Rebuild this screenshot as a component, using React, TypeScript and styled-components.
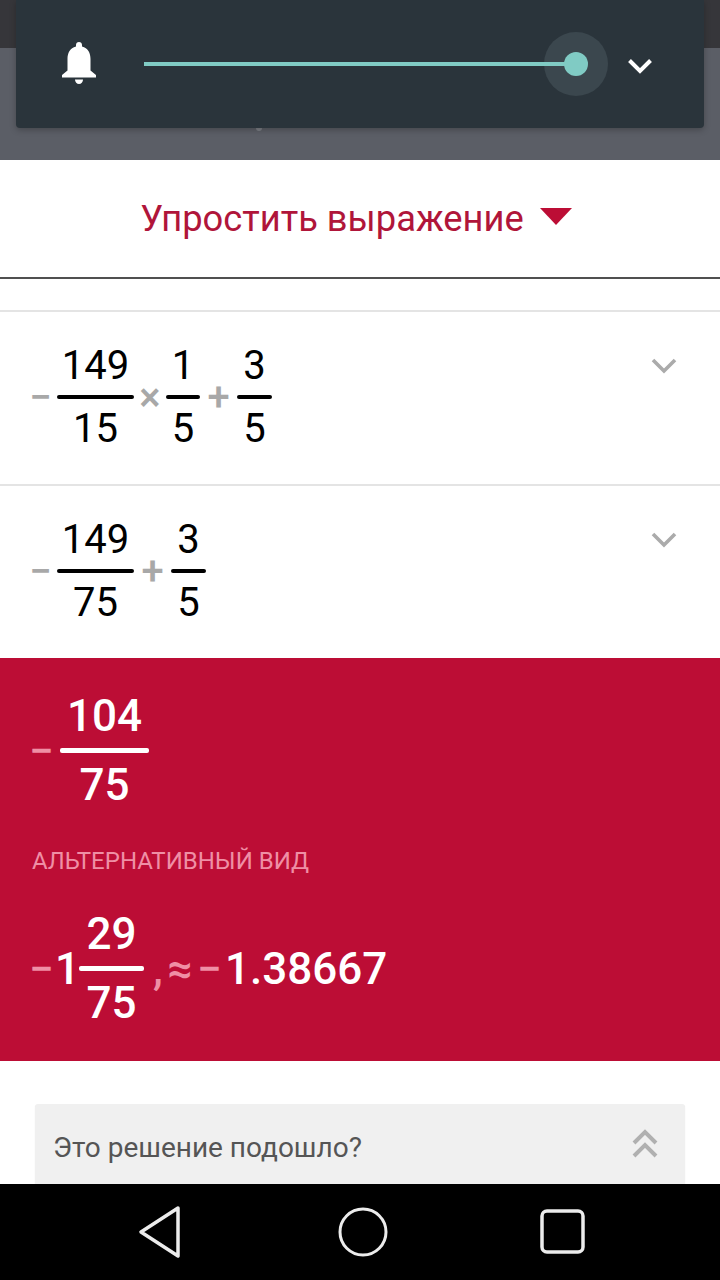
import React from "react";
import styled, { createGlobalStyle } from "styled-components";

const Global = createGlobalStyle`
  html, body { margin: 0; padding: 0; background: #fff; }
  #root { width: 720px; height: 1280px; overflow: hidden; }
  * { box-sizing: border-box; }
`;

const Page = styled.div`
  position: relative;
  width: 720px;
  height: 1280px;
  display: flex;
  flex-direction: column;
  font-family: Roboto, "Liberation Sans", sans-serif;
  overflow: hidden;
`;

const TopDark = styled.div`
  height: 48px;
  background: #36363a;
  flex: none;
`;

const Scrim = styled.div`
  position: relative;
  height: 112px;
  background: #5b5e66;
  flex: none;
`;

const Speck = styled.div`
  position: absolute;
  left: 256px;
  top: 80px;
  width: 6px;
  height: 3px;
  border-radius: 0 0 3px 3px;
  background: #7c7f85;
`;

const VolumePanel = styled.div`
  position: absolute;
  left: 16px;
  top: 0;
  width: 688px;
  height: 128px;
  background: #2a343b;
  border-radius: 0 0 4px 4px;
  box-shadow: 0 2px 6px rgba(0, 0, 0, 0.25);
  display: flex;
  align-items: center;
  padding: 0 0 0 44px;
`;

const BellIcon = styled.svg`
  flex: none;
`;

const Track = styled.div`
  position: relative;
  margin-left: 46px;
  width: 432px;
  height: 4px;
  flex: none;
`;

const ThumbHalo = styled.div`
  position: absolute;
  right: -32px;
  top: -30px;
  width: 64px;
  height: 64px;
  border-radius: 50%;
  background: #3b474e;
`;

const TrackFill = styled.div`
  position: absolute;
  inset: 0;
  background: #80cbc4;
`;

const Thumb = styled.div`
  position: absolute;
  right: -12px;
  top: -10px;
  width: 24px;
  height: 24px;
  border-radius: 50%;
  background: #80cbc4;
`;

const ExpandIcon = styled.svg`
  margin-left: 51px;
  margin-top: 4px;
  flex: none;
`;

const Header = styled.div`
  height: 119px;
  flex: none;
  background: #fff;
  border-bottom: 2px solid #505050;
  display: flex;
  align-items: center;
  justify-content: center;
  gap: 16px;
  padding: 0 8px 0 0;
`;

const HeaderTitle = styled.span`
  font-size: 36.3px;
  color: #b0153a;
`;

const Caret = styled.svg`
  flex: none;
  margin-bottom: 5px;
`;

const Spacer = styled.div`
  height: 31px;
  flex: none;
`;

const StepRow = styled.div`
  position: relative;
  height: 174px;
  flex: none;
  border-top: 2px solid #e4e4e4;
  padding: 31px 0 0 32px;
  background: #fff;
`;

const Expr = styled.div<{ $light?: boolean }>`
  display: flex;
  align-items: center;
  font-size: ${(p) => (p.$light ? 44 : 40)}px;
  font-weight: ${(p) => (p.$light ? 500 : 400)};
  color: ${(p) => (p.$light ? "#fff" : "#000")};
`;

const Op = styled.span<{ $light?: boolean; $w: number; $before?: number; $after?: number }>`
  width: ${(p) => p.$w}px;
  margin-left: ${(p) => p.$before ?? 0}px;
  margin-right: ${(p) => p.$after ?? 0}px;
  flex: none;
  display: flex;
  justify-content: center;
  color: ${(p) => (p.$light ? "#ef8fa5" : "#a8a8a8")};
  font-weight: 500;
  line-height: 1;
`;

const Frac = styled.span<{ $w: number }>`
  display: inline-flex;
  flex-direction: column;
  align-items: center;
  width: ${(p) => p.$w}px;
  flex: none;
`;

const Num = styled.span<{ $light?: boolean }>`
  line-height: ${(p) => (p.$light ? 50 : 46)}px;
  height: ${(p) => (p.$light ? 50 : 46)}px;
`;

const Bar = styled.span<{ $light?: boolean }>`
  align-self: stretch;
  height: ${(p) => (p.$light ? 5 : 4)}px;
  border-radius: 2px;
  margin: ${(p) => (p.$light ? 7 : 6)}px 0 7px;
  background: ${(p) => (p.$light ? "#fff" : "#000")};
`;

const Chevron = styled.svg`
  position: absolute;
  right: 43px;
  top: 46px;
`;

const Answer = styled.div`
  height: 403px;
  flex: none;
  background: #bc0d35;
  padding: 33px 0 0 32px;
  display: flex;
  flex-direction: column;
`;

const AltLabel = styled.div`
  margin-top: 35px;
  font-size: 24px;
  line-height: 32px;
  color: #ef8fa5;
`;

const AltExpr = styled.div`
  margin-top: 32px;
`;

const Plain = styled.span<{ $after?: number }>`
  flex: none;
  line-height: 1;
  margin-right: ${(p) => p.$after ?? 0}px;
`;

const Rest = styled.div`
  flex: 1;
  background: #fff;
  padding: 43px 35px 0;
  overflow: hidden;
`;

const Card = styled.div`
  height: 100px;
  background: #f0f0f0;
  border-radius: 3px;
  box-shadow: 0 1px 1px rgba(0, 0, 0, 0.12);
  padding: 25px 27px 0 18px;
  display: flex;
  justify-content: space-between;
  align-items: flex-start;
`;

const CardText = styled.span`
  font-size: 28px;
  line-height: 38px;
  color: #555;
`;

const NavBar = styled.div`
  height: 96px;
  flex: none;
  background: #000;
  display: flex;
  align-items: center;
  padding-left: 138px;
`;

const NavIcon = styled.svg<{ $ml?: number }>`
  flex: none;
  margin-left: ${(p) => p.$ml ?? 0}px;
`;

const Chev = () => (
  <Chevron width="26" height="16" viewBox="0 0 26 16" fill="none">
    <path d="M2 2 L13 13 L24 2" stroke="#ababab" strokeWidth="3.6" />
  </Chevron>
);

const F = ({ n, d, w, light }: { n: string; d: string; w: number; light?: boolean }) => (
  <Frac $w={w}>
    <Num $light={light}>{n}</Num>
    <Bar $light={light} />
    <Num $light={light}>{d}</Num>
  </Frac>
);

export default function App() {
  return (
    <Page>
      <Global />
      <TopDark />
      <Scrim>
        <Speck />
      </Scrim>
      <VolumePanel>
        <BellIcon width="38" height="44" viewBox="0 0 38 44" fill="#fff">
          <path d="M19 0c1.8 0 3 1.3 3 3v1.6C28 6 30.5 11 30.5 17v11.5L36 33v2.500H2V33l5.500-4.500V17C7.500 11 10 6 16 4.600V3c0-1.700 1.200-3 3-3z" />
          <path d="M15 37.500h8c0 2.500-1.800 4.500-4 4.500s-4-2-4-4.500z" />
        </BellIcon>
        <Track>
          <ThumbHalo />
          <TrackFill />
          <Thumb />
        </Track>
        <ExpandIcon width="26" height="17" viewBox="0 0 26 17" fill="none">
          <path d="M2.500 2.500 L13 13 L23.500 2.500" stroke="#fff" strokeWidth="4" />
        </ExpandIcon>
      </VolumePanel>
      <Header>
        <HeaderTitle>Упростить выражение</HeaderTitle>
        <Caret width="32" height="17" viewBox="0 0 32 17">
          <path d="M0 0H32L16 17Z" fill="#bc0d35" />
        </Caret>
      </Header>
      <Spacer />
      <StepRow>
        <Expr>
          <Op $w={17} $after={8}>−</Op>
          <F n="149" d="15" w={77} />
          <Op $w={32}>×</Op>
          <F n="1" d="5" w={34} />
          <Op $w={37}>+</Op>
          <F n="3" d="5" w={35} />
        </Expr>
        <Chev />
      </StepRow>
      <StepRow>
        <Expr>
          <Op $w={17} $after={8}>−</Op>
          <F n="149" d="75" w={77} />
          <Op $w={37}>+</Op>
          <F n="3" d="5" w={35} />
        </Expr>
        <Chev />
      </StepRow>
      <Answer>
        <Expr $light>
          <Op $light $w={19} $after={9}>−</Op>
          <F light n="104" d="75" w={89} />
        </Expr>
        <AltLabel>АЛЬТЕРНАТИВНЫЙ ВИД</AltLabel>
        <AltExpr>
          <Expr $light>
            <Op $light $w={19} $after={4}>−</Op>
            <Plain $after={-1}>1</Plain>
            <F light n="29" d="75" w={65} />
            <Op $light $w={28}>,</Op>
            <Op $light $w={16}>≈</Op>
            <Op $light $w={31} $before={6}>−</Op>
            <Plain>1.38667</Plain>
          </Expr>
        </AltExpr>
      </Answer>
      <Rest>
        <Card>
          <CardText>Это решение подошло?</CardText>
          <svg width="26" height="30" viewBox="0 0 26 30" fill="none">
            <path d="M2 14 L13 3 L24 14 M2 27 L13 16 L24 27" stroke="#b0b0b0" strokeWidth="4" />
          </svg>
        </Card>
      </Rest>
      <NavBar>
        <NavIcon width="44" height="54" viewBox="0 0 44 54" fill="none">
          <path d="M40 3 L3 27 L40 51 Z" stroke="#ececec" strokeWidth="3.500" strokeLinejoin="round" />
        </NavIcon>
        <NavIcon $ml={156} width="50" height="50" viewBox="0 0 50 50" fill="none">
          <circle cx="25" cy="25" r="23" stroke="#ececec" strokeWidth="3" />
        </NavIcon>
        <NavIcon $ml={152} width="46" height="46" viewBox="0 0 46 46" fill="none">
          <rect x="2" y="2" width="41" height="41" rx="5" stroke="#ececec" strokeWidth="3.500" />
        </NavIcon>
      </NavBar>
    </Page>
  );
}
